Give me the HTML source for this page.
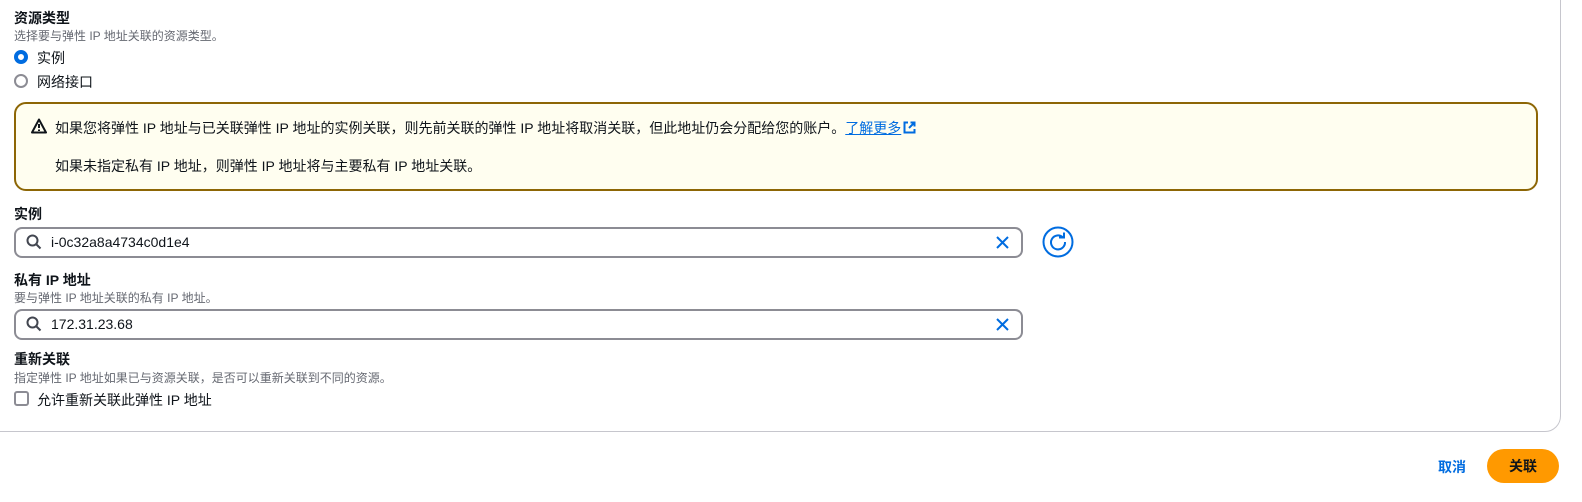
<!DOCTYPE html>
<html><head><meta charset="utf-8"><style>
*{box-sizing:border-box;margin:0;padding:0}
body{width:1582px;height:502px;background:#fff;font-family:"Liberation Sans","Noto Sans CJK SC",sans-serif;color:#0f141a;position:relative;overflow:hidden}
.a{position:absolute;white-space:nowrap}
.t{font-size:14px;font-weight:bold}
.d{font-size:12px;color:#656871}
.n{font-size:14px}
.card{position:absolute;left:-20px;top:-20px;width:1581px;height:452px;border:1px solid #c6c6cd;border-radius:16px}
.inp{position:absolute;left:14px;width:1009px;height:31px;border:2px solid #8c8c94;border-radius:8px}
</style></head><body>
<div class="card"></div>
<div class="a t" style="left:14px;top:8px">资源类型</div>
<div class="a d" style="left:14px;top:27px">选择要与弹性 IP 地址关联的资源类型。</div>
<div class="a" style="left:14px;top:50px;width:14px;height:14px;border-radius:50%;border:4px solid #006ce0"></div>
<div class="a n" style="left:37px;top:48px">实例</div>
<div class="a" style="left:14px;top:74px;width:14px;height:14px;border-radius:50%;border:2px solid #8c8c94"></div>
<div class="a n" style="left:37px;top:72px">网络接口</div>
<div class="a" style="left:14px;top:102px;width:1524px;height:89px;border:2px solid #8d6605;border-radius:12px;background:#fffef0"></div>
<svg class="a" style="left:31px;top:118px" width="16" height="16" viewBox="0 0 16 16"><path d="M8 1.5L15 14.5H1Z" fill="none" stroke="#0f141a" stroke-width="2" stroke-linejoin="round"/><path d="M8 6v4M8 11.5v1.5" stroke="#0f141a" stroke-width="2"/></svg>
<div class="a n" style="left:55px;top:118px">如果您将弹性 IP 地址与已关联弹性 IP 地址的实例关联，则先前关联的弹性 IP 地址将取消关联，但此地址仍会分配给您的账户。<span style="color:#006ce0;text-decoration:underline">了解更多</span><svg style="margin-left:2px;vertical-align:-1px" width="13" height="13" viewBox="0 0 13 13"><path d="M5 1.5H1.5V11.5H11.5V8M7.5 1.5H11.5V5.5M11.5 1.5L6 7" fill="none" stroke="#006ce0" stroke-width="2"/></svg></div>
<div class="a n" style="left:55px;top:156px">如果未指定私有 IP 地址，则弹性 IP 地址将与主要私有 IP 地址关联。</div>
<div class="a t" style="left:14px;top:204px">实例</div>
<div class="inp" style="top:227px"></div>
<svg class="a" style="left:26px;top:234px" width="16" height="16" viewBox="0 0 16 16"><circle cx="6.5" cy="6.5" r="5" fill="none" stroke="#424650" stroke-width="2"/><path d="M10 10l4.5 4.5" stroke="#424650" stroke-width="2"/></svg>
<div class="a n" style="left:51px;top:234px">i-0c32a8a4734c0d1e4</div>
<svg class="a" style="left:995px;top:235px" width="15" height="15" viewBox="0 0 15 15"><path d="M2 2l11 11M13 2L2 13" stroke="#006ce0" stroke-width="2"/></svg>
<svg class="a" style="left:1042px;top:226px" width="32" height="32" viewBox="0 0 32 32"><circle cx="16" cy="16" r="14.5" fill="none" stroke="#006ce0" stroke-width="2"/><path d="M21 11.5A7 7 0 1 0 23 16" fill="none" stroke="#006ce0" stroke-width="2"/><path d="M17 11.5H22V6.5" fill="none" stroke="#006ce0" stroke-width="2"/></svg>
<div class="a t" style="left:14px;top:270px">私有 IP 地址</div>
<div class="a d" style="left:14px;top:289px">要与弹性 IP 地址关联的私有 IP 地址。</div>
<div class="inp" style="top:309px"></div>
<svg class="a" style="left:26px;top:316px" width="16" height="16" viewBox="0 0 16 16"><circle cx="6.5" cy="6.5" r="5" fill="none" stroke="#424650" stroke-width="2"/><path d="M10 10l4.5 4.5" stroke="#424650" stroke-width="2"/></svg>
<div class="a n" style="left:51px;top:316px">172.31.23.68</div>
<svg class="a" style="left:995px;top:317px" width="15" height="15" viewBox="0 0 15 15"><path d="M2 2l11 11M13 2L2 13" stroke="#006ce0" stroke-width="2"/></svg>
<div class="a t" style="left:14px;top:349px">重新关联</div>
<div class="a d" style="left:14px;top:369px">指定弹性 IP 地址如果已与资源关联，是否可以重新关联到不同的资源。</div>
<div class="a" style="left:14px;top:391px;width:15px;height:15px;border:2px solid #8c8c94;border-radius:3px"></div>
<div class="a n" style="left:37px;top:390px">允许重新关联此弹性 IP 地址</div>
<div class="a" style="left:1438px;top:457px;font-size:14px;font-weight:bold;color:#006ce0">取消</div>
<div class="a" style="left:1487px;top:449px;width:72px;height:34px;border-radius:17px;background:#ff9900;font-size:14px;font-weight:bold;text-align:center;line-height:34px">关联</div>
</body></html>
